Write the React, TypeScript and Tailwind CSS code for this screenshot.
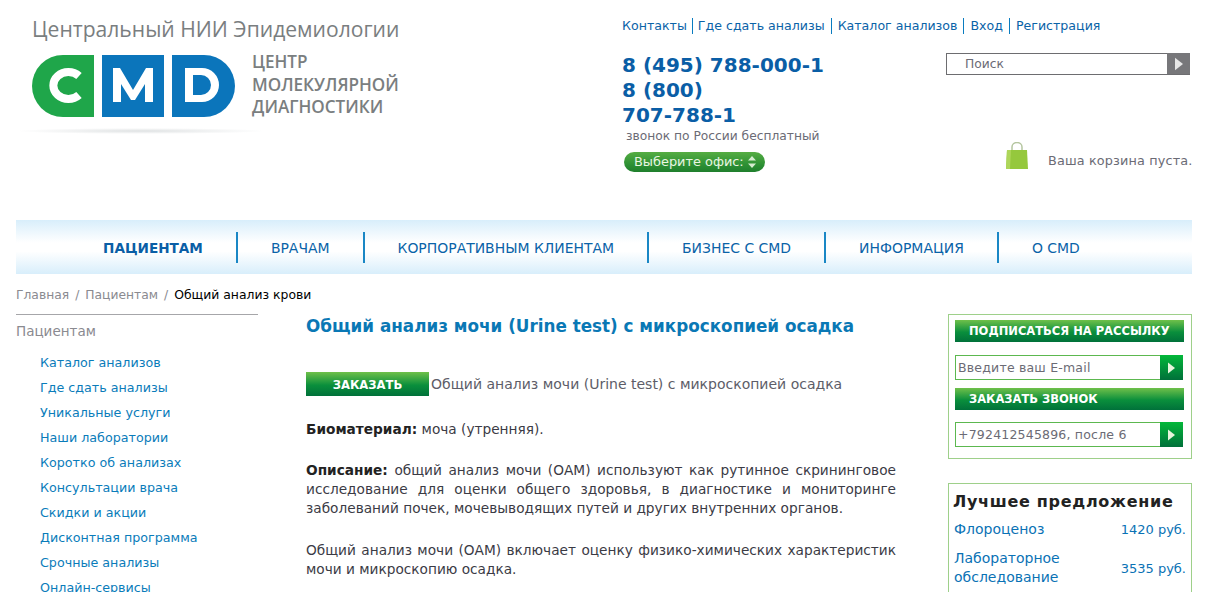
const font = "[font-family:'DejaVu_Sans',Verdana,sans-serif]";

function Logo() {
  return (
    <div className="relative mt-[17px] h-[120px] w-[400px]">
      <div className="text-[21.1px] leading-[24px] text-[#7a7e80] [font-family:'Open_Sans',sans-serif] ml-[16px] whitespace-nowrap">Центральный НИИ Эпидемиологии</div>
      <div className="flex mt-[14px] ml-[16px] items-start">
        <svg width="204" height="62" viewBox="0 0 204 62" className="shrink-0">
          <path d="M31 0H62V62H31A31 31 0 0 1 31 0Z" fill="#1fa64a" />
          <rect x="70" width="62" height="62" fill="#0b75bb" />
          <path d="M140 0H172A31 31 0 0 1 172 62H140Z" fill="#0b75bb" />
          <path d="M47 21A15 13.500 0 1 0 47 40" fill="none" stroke="#fff" strokeWidth="8" />
          <path d="M81 47V13H88L101 35L114 13H121V47H113V29L103 45H99L89 29V47Z" fill="#fff" />
          <path d="M153 13H170A17 17 0 0 1 170 47H153ZM161 20V40H169A10 10 0 0 0 169 20Z" fill="#fff" fillRule="evenodd" />
        </svg>
        <div className="ml-[16px] text-[17.1px] leading-[22.5px] font-semibold text-[#7a7e80] [font-family:'Open_Sans',sans-serif] whitespace-nowrap -mt-[4px]">
          <div>ЦЕНТР</div>
          <div>МОЛЕКУЛЯРНОЙ</div>
          <div>ДИАГНОСТИКИ</div>
        </div>
      </div>
      <div className="absolute left-0 top-[111px] h-[6px] w-[250px] bg-[radial-gradient(ellipse_at_center,#dfe2e3,#ffffff_70%)]" />
    </div>
  );
}

function Arrow({ className }: { className: string }) {
  return (
    <svg width="9" height="14" viewBox="0 0 9 14" className={className}>
      <path d="M0 0L9 7L0 14Z" fill="currentColor" />
    </svg>
  );
}

const green = "bg-[linear-gradient(#6fc04a,#0a8f3c_55%,#00713a)]";

function GreenField({ text }: { text: string }) {
  return (
    <div className="mr-[1px] flex h-[25px] border-y-[1.5px] border-l-[1.5px] border-[#5cb84f]">
      <div className="flex-1 pl-[2px] text-[12.5px] leading-[23px] text-[#6b6b75] whitespace-nowrap overflow-hidden tracking-[0.2px]">{text}</div>
      <div className="w-[23px] bg-[linear-gradient(#03b83a,#00703a)] flex items-center justify-center -my-[1px]">
        <Arrow className="text-[#e8f5dc] h-[12px] w-[7px]" />
      </div>
    </div>
  );
}

export default function App() {
  const top = ["Контакты", "Где сдать анализы", "Каталог анализов", "Вход", "Регистрация"];
  const nav = ["ПАЦИЕНТАМ", "ВРАЧАМ", "КОРПОРАТИВНЫМ КЛИЕНТАМ", "БИЗНЕС С CMD", "ИНФОРМАЦИЯ", "О CMD"];
  const side = ["Каталог анализов", "Где сдать анализы", "Уникальные услуги", "Наши лаборатории", "Коротко об анализах", "Консультации врача", "Скидки и акции", "Дисконтная программа", "Срочные анализы", "Онлайн-сервисы"];
  return (
    <div className={`h-[592px] w-[1209px] overflow-hidden bg-white pl-4 pr-[17px] text-[13px] ${font}`}>
      <header className="flex h-[220px]">
        <div className="w-[606px] shrink-0"><Logo /></div>
        <div className="w-[324px] shrink-0 pt-[18px]">
          <div className="flex h-[16px] items-center text-[12.6px] text-[#0a63a8] whitespace-nowrap">
            {top.map((t, i) => (
              <span key={t} className={i === 0 ? "border-r border-[#0a7cc0] pr-[5px] mr-[5px] leading-[16px]" : i < top.length - 1 ? "border-r border-[#0a7cc0] pr-[6px] mr-[6px] leading-[16px]" : "leading-[16px]"}>{t}</span>
            ))}
          </div>
          <div className="mt-[19px] text-[20px] leading-[25px] font-bold text-[#0a5ea6]">
            <div>8 (495) 788-000-1</div>
            <div>8 (800)</div>
            <div>707-788-1</div>
          </div>
          <div className="ml-[4px] text-[12.25px] leading-[16px] text-[#6b6b75]">звонок по России бесплатный</div>
          <div className="mt-[8px] ml-[2px] flex h-[20px] w-[141px] items-center rounded-full bg-[linear-gradient(#56ad43,#2f9235_60%,#1f7f2d)] pl-[10px] text-[12.9px] text-[#eaf6e2]">
            Выберите офис:
            <svg width="10" height="12" viewBox="0 0 10 12" className="ml-[3px]"><path d="M5 0L9 4.500H1ZM5 12L1 7.500H9Z" fill="#d6ecd0" /></svg>
          </div>
        </div>
        <div className="relative flex-1 pt-[53px]">
          <div className="flex h-[22px] w-[244px] border-y border-l border-[#6d6d70]">
            <div className="flex-1 pl-[18px] text-[12.3px] leading-[20px] text-[#6b6b75]">Поиск</div>
            <div className="flex w-[23px] items-center justify-center bg-[#77777a] -mt-[1px]">
              <Arrow className="text-[#e6e6e6] h-[14px] w-[8px]" />
            </div>
          </div>
          <div className="mt-[67px] ml-[59px] flex items-start whitespace-nowrap">
            <svg width="24" height="28" viewBox="0 0 24 28">
              <path d="M7 8V5A5 4.500 0 0 1 17 5V8" fill="none" stroke="#b5c6a0" strokeWidth="1.500" />
              <path d="M2 8H22L23 27H1Z" fill="#95c83d" />
              <path d="M2 8H6L5 27H1Z" fill="#aed65a" />
            </svg>
            <span className="ml-[19px] mt-[11px] leading-[16px] text-[#6b6b75] text-[12.8px] tracking-[0.15px]">Ваша корзина пуста.</span>
          </div>
        </div>
      </header>

      <nav className="flex h-[54px] items-center bg-[linear-gradient(#d8eefb,#ffffff_42%,#ffffff_58%,#d8eefb)] pl-[54px] text-[13.95px] text-[#0a63a8] whitespace-nowrap">
        {nav.map((n, i) => (
          <div key={n} className={`px-[33px] pt-[1px] leading-[30px] ${i === 0 ? "font-bold text-[#0a5ea6] text-[13.6px]" : ""} ${i < nav.length - 1 ? "border-r-2 border-[#1a87c5]" : ""}`}>{n}</div>
        ))}
      </nav>

      <div className="mt-[13px] flex h-[16px] text-[12.3px] leading-[16px] text-[#8a8a90] whitespace-nowrap">
        <span>Главная</span><span className="mx-[6px]">/</span><span>Пациентам</span><span className="mx-[6px]">/</span><span className="text-black text-[12.4px]">Общий анализ крови</span>
      </div>

      <div className="mt-[11px] flex items-start">
        <aside className="w-[242px] shrink-0 border-t border-[#a6a6a9] pt-[7px]">
          <div className="text-[13.5px] leading-[18px] text-[#8a8a90]">Пациентам</div>
          <ul className="mt-[10px] pl-[24px] text-[12.7px] text-[#0a7cba]">
            {side.map((s) => <li key={s} className="h-[25px] leading-[25px] whitespace-nowrap">{s}</li>)}
          </ul>
        </aside>

        <main className="ml-[48px] w-[590px] shrink-0 text-[13.7px] leading-[19px] text-[#3b3b45]">
          <h1 className="text-[16.8px] leading-[22px] font-bold text-[#0a78b5] mt-[1px] whitespace-nowrap">Общий анализ мочи (Urine test) с микроскопией осадка</h1>
          <div className="mt-[35px] flex items-center whitespace-nowrap">
            <div className={`h-[24px] w-[123px] ${green} text-center text-[11.6px] font-bold leading-[26px] text-white`}>ЗАКАЗАТЬ</div>
            <span className="ml-[2px] text-[14px] leading-[22px] text-[#5d5d68]">Общий анализ мочи (Urine test) с микроскопией осадка</span>
          </div>
          <p className="mt-[24px]"><b className="text-[#222]">Биоматериал:</b> моча (утренняя).</p>
          <p className="mt-[22px] text-justify"><b className="text-[#222]">Описание:</b> общий анализ мочи (ОАМ) используют как рутинное скрининговое исследование для оценки общего здоровья, в диагностике и мониторинге заболеваний почек, мочевыводящих путей и других внутренних органов.</p>
          <p className="mt-[23px] text-justify">Общий анализ мочи (ОАМ) включает оценку физико-химических характеристик мочи и микроскопию осадка.</p>
        </main>

        <aside className="ml-[52px] w-[244px] shrink-0">
          <div className="h-[145px] border border-[#9ed08a] pl-[6px] pr-[7px] pt-[5px]">
            <div className={`h-[22px] ${green} pl-[14px] text-[11.5px] font-bold leading-[22px] text-white whitespace-nowrap`}>ПОДПИСАТЬСЯ НА РАССЫЛКУ</div>
            <div className="mt-[13px]"><GreenField text="Введите ваш E-mail" /></div>
            <div className={`mt-[8px] h-[22px] ${green} pl-[14px] text-[11.5px] font-bold leading-[23px] text-white`}>ЗАКАЗАТЬ ЗВОНОК</div>
            <div className="mt-[12px]"><GreenField text="+792412545896, после 6" /></div>
          </div>
          <div className="mt-[24px] h-[120px] border border-[#9ed08a] px-[4px] pt-[7px]">
            <div className="text-[16px] leading-[22px] font-bold text-[#222] tracking-[0.7px] whitespace-nowrap">Лучшее предложение</div>
            <div className="mt-[7px] flex justify-between text-[14px] leading-[19px] text-[#0a72b5] pl-[1px] pr-[1px]">
              <span>Флороценоз</span><span className="text-[13px]">1420 руб.</span>
            </div>
            <div className="mt-[10px] flex items-center justify-between text-[14px] leading-[19px] text-[#0a72b5] pl-[1px] pr-[1px]">
              <span>Лабораторное<br />обследование</span><span className="text-[13px]">3535 руб.</span>
            </div>
          </div>
        </aside>
      </div>
    </div>
  );
}
